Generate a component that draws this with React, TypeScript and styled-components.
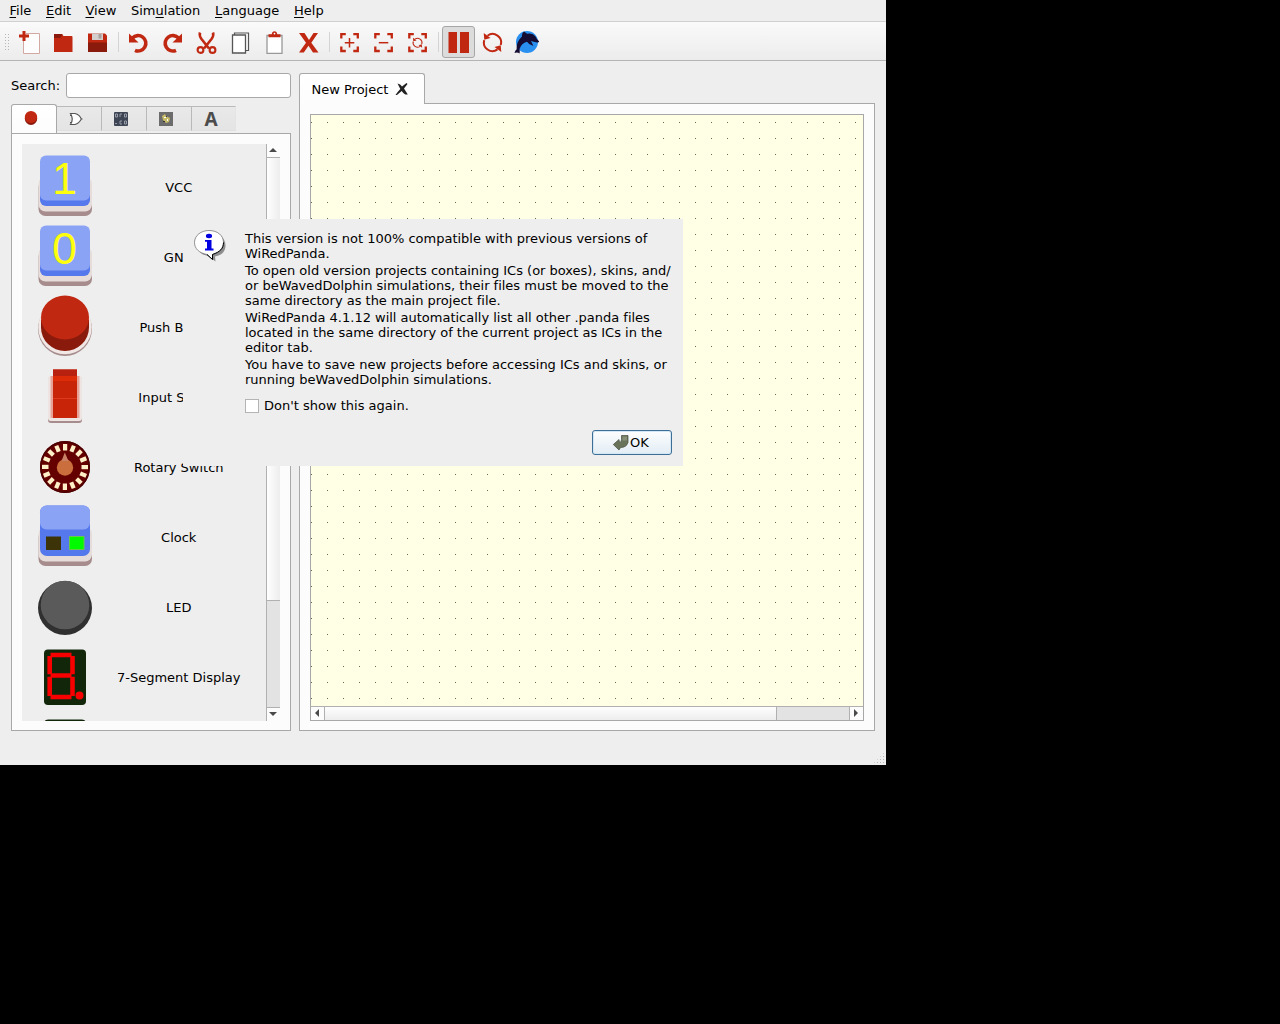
import React from "react";
import styled, { createGlobalStyle, css } from "styled-components";

const GlobalStyle = createGlobalStyle`
  html, body { margin: 0; padding: 0; background: #000; overflow: hidden; }
  *, *::before, *::after { box-sizing: border-box; }
  svg { display: block; flex: none; }
`;

const RED = "#c02812";
const DARK_RED = "#8a1a0b";

const Window = styled.div`
  position: relative;
  width: 886px;
  height: 765px;
  display: flex;
  flex-direction: column;
  background: #eeeeee;
  color: #000;
  font: 13px/15px "DejaVu Sans", sans-serif;
  cursor: default;
`;

const MenuBar = styled.nav`
  display: flex;
  height: 21px;
  padding: 3px 0 0 9.5px;
`;
const MenuItem = styled.span<{ $w: number }>`
  width: ${(p) => p.$w}px;
  flex: none;
  white-space: nowrap;
  u { text-underline-offset: 2px; text-decoration-thickness: 1px; text-decoration-skip-ink: none; }
`;

const ToolBar = styled.div`
  display: flex;
  align-items: center;
  height: 40px;
  padding: 2px 0 0 4px;
  border-top: 1px solid #d0d0d0;
  border-bottom: 1px solid #b4b4b4;
  background: linear-gradient(#fafafa, #ececec);
`;
const Grip = styled.div<{ $w: number; $h: number }>`
  width: ${(p) => p.$w}px;
  height: ${(p) => p.$h}px;
  background-image: radial-gradient(circle at 1.5px 1.5px, #b4b4b4 0.5px, transparent 0.9px);
  background-size: 3px 3px;
`;
const CornerGrip = styled(Grip)`
  clip-path: polygon(100% 0, 100% 100%, 0 100%);
`;
const ToolGroup = styled.div<{ $ml?: number }>`
  display: flex;
  margin-left: ${(p) => p.$ml ?? 0}px;
`;
const ToolButton = styled.button<{ $active?: boolean }>`
  display: flex;
  align-items: center;
  justify-content: center;
  width: 33px;
  height: 32px;
  margin-right: 1px;
  padding: 0 1px 0 0;
  border: 1px solid transparent;
  border-radius: 3px;
  background: transparent;
  ${(p) => p.$active && css`
    border-color: #a6a6a6;
    background: #dcdcdc;
  `}
`;
const Separator = styled.div`
  width: 7px;
  height: 20px;
  border-left: 1px solid #d4d4d4;
  margin-left: 3px;
  margin-right: -3px;
`;

const Body = styled.main`
  display: flex;
  gap: 8px;
  height: 670px;
  padding: 12px 11px 0;
`;
const Side = styled.aside`
  width: 280px;
  display: flex;
  flex-direction: column;
`;
const SearchRow = styled.label`
  display: flex;
  align-items: center;
  justify-content: space-between;
  height: 25px;
  margin-bottom: 6px;
`;
const SearchInput = styled.input`
  width: 225px;
  height: 25px;
  border: 1px solid #a8a8a8;
  border-radius: 3px;
  background: #fff;
  outline: none;
`;
const TabRow = styled.div`
  display: flex;
  align-items: flex-end;
  height: 29px;
`;
const SideTab = styled.button<{ $active?: boolean; $last?: boolean }>`
  display: flex;
  align-items: center;
  justify-content: center;
  width: 45px;
  height: 25px;
  margin-bottom: 2px;
  padding: 0 6px 0 0;
  border: 1px solid #b9b9b9;
  border-left: 0;
  border-bottom-color: #e0e0e0;
  background: linear-gradient(#e9e9e9, #e4e4e4);
  ${(p) => p.$last && css`
    width: 44px;
    padding-right: 5px;
    border-right-color: #e4e4e4;
  `}
  ${(p) => p.$active && css`
    width: 46px;
    height: 29px;
    margin-bottom: 0;
    padding-bottom: 3px;
    border: 1px solid #a8a8a8;
    border-bottom: 0;
    border-radius: 3px 3px 0 0;
    background: linear-gradient(#ffffff, #fcfcfc);
  `}
`;
const SidePanel = styled.section`
  display: flex;
  width: 280px;
  height: 598px;
  padding: 10px;
  border: 1px solid #a8a8a8;
  background: #fcfcfc;
`;
const List = styled.div`
  width: 244px;
  height: 577px;
  padding-top: 8px;
  overflow: hidden;
  background: #eeeeee;
`;
const Item = styled.div`
  display: flex;
  align-items: center;
  height: 70px;
  padding-left: 11px;
`;
const ItemLabel = styled.span`
  flex: 1;
  padding-left: 4px;
  padding-right: 9.5px;
  text-align: center;
  white-space: nowrap;
`;

const VScroll = styled.div`
  display: flex;
  flex-direction: column;
  width: 14px;
  height: 577px;
  border-left: 1px solid #b0b0b0;
`;
const HScroll = styled.div`
  display: flex;
  height: 14px;
  border-top: 1px solid #b0b0b0;
`;
const Arrow = styled.div`
  display: flex;
  align-items: center;
  justify-content: center;
  flex: none;
  width: 13px;
  height: 13px;
  padding: 0 2px 2px 0;
  background: #fcfcfc;
`;
const Thumb = styled.div<{ $v?: boolean; $size: number }>`
  flex: none;
  ${(p) => p.$v ? css`
    height: ${p.$size}px;
    border: solid #b0b0b0;
    border-width: 1px 0;
    background: linear-gradient(90deg, #fefefe, #ededed);
  ` : css`
    width: ${p.$size}px;
    border: solid #b0b0b0;
    border-width: 0 1px;
    background: linear-gradient(#fefefe, #ededed);
  `}
`;
const Trough = styled.div<{ $v?: boolean }>`
  flex: 1;
  background: #e3e3e3;
  ${(p) => p.$v ? css`border-bottom: 1px solid #b0b0b0;` : css`border-right: 1px solid #b0b0b0;`}
`;

const Work = styled.section`
  width: 576px;
`;
const ProjectTab = styled.div`
  display: flex;
  align-items: center;
  gap: 7px;
  position: relative;
  z-index: 1;
  width: 126px;
  height: 31px;
  margin-bottom: -1px;
  padding: 0 0 0 11.5px;
  border: 1px solid #a8a8a8;
  border-bottom: 0;
  border-radius: 3px 3px 0 0;
  background: linear-gradient(#ffffff, #fcfcfc);
  white-space: nowrap;
`;
const WorkPanel = styled.div`
  height: 628px;
  padding: 10px;
  border: 1px solid #a8a8a8;
  background: #fcfcfc;
`;
const Frame = styled.div`
  height: 607px;
  border: 1px solid #a8a8a8;
`;
const Scene = styled.div`
  height: 591px;
  background-image:
    linear-gradient(90deg, transparent 1px, #ffffe6 1px),
    linear-gradient(#ffffe6 7px, #66665a 7px, #66665a 8px, #ffffe6 8px);
  background-size: 16px 16px;
`;
const StatusBar = styled.div`
  display: flex;
  justify-content: flex-end;
  align-items: flex-end;
  height: 34px;
  padding: 0 1px 1px 0;
`;

const Dialog = styled.div`
  position: absolute;
  left: 183px;
  top: 219px;
  width: 500px;
  height: 247px;
  display: flex;
  flex-direction: column;
  padding: 11px;
  background: #eeeeee;
`;
const Message = styled.div`
  display: flex;
  gap: 17px;
`;
const Copy = styled.div`
  display: flex;
  flex-direction: column;
  gap: 2px;
  padding-top: 1px;
  letter-spacing: -0.008px;
  white-space: nowrap;
`;
const Para = styled.p`
  margin: 0;
`;
const CheckRow = styled.label`
  display: flex;
  align-items: center;
  gap: 5px;
  height: 15px;
  margin: 11px 0 0 51px;
`;
const Box = styled.span`
  width: 14px;
  height: 14px;
  border: 1px solid #b4b4b4;
  background: #fff;
`;
const OkButton = styled.button`
  display: flex;
  align-items: center;
  justify-content: center;
  gap: 1px;
  width: 80px;
  height: 25px;
  margin: auto 0 0 auto;
  padding: 0 2px 0 0;
  border: 1px solid #3d6f96;
  border-radius: 3px;
  background: linear-gradient(#fdfdfe, #e2edf4);
  box-shadow: inset 0 0 0 1px #d3e7f4;
  font: inherit;
  color: #000;
`;

const Svg = ({ s = 24, dx = 0, dy = 0, children }: { s?: number; dx?: number; dy?: number; children: React.ReactNode }) => (
  <svg width={s} height={s} viewBox={`${-dx} ${-dy} ${s} ${s}`}>{children}</svg>
);

const NewIcon = () => (
  <Svg dx={2}>
    <path d="M7 3.500H20.500V23.500H4.500V10" fill="#fdfdfd" stroke="#d2a8a2" />
    <path d="M5 1v10M0 6h10" stroke={RED} strokeWidth="3" />
  </Svg>
);
const OpenIcon = () => (
  <Svg dx={1} dy={0.5}><path d="M2 3.500h8l1.500 2H19.500q1 0 1 1V21.500H2Z" fill={RED} /><path d="M2 3.500h8.500l-2 4H2Z" fill={DARK_RED} /></Svg>
);
const SaveIcon = () => (
  <Svg dx={1} dy={0.5}>
    <path d="M2 3H19l2 2V21.500H2Z" fill={RED} />
    <path d="M2 12H21V21.500H2Z" fill={DARK_RED} />
    <path d="M6 3h11v6.500h-11Z" fill="#d4cfcc" /><path d="M12.500 3.500h3v4.500h-3Z" fill="#a8a09c" />
  </Svg>
);
const TurnArrow = () => (
  <>
    <path d="M5.500 8A7.700 7.700 0 1 1 8 20.300" fill="none" stroke={RED} strokeWidth="3.600" />
    <path d="M2 3.500V12.500H11.500Z" fill={RED} />
  </>
);
const UndoIcon = () => <Svg dx={1}><TurnArrow /></Svg>;
const RedoIcon = () => (
  <Svg><g transform="translate(24 0) scale(-1 1)"><TurnArrow /></g></Svg>
);
const CutIcon = () => (
  <Svg dx={0.5} dy={0.5}>
    <path d="M5.500 2Q4.500 5 7 8.500L14.500 18M18.500 2Q19.500 5 17 8.500L9.500 18" fill="none" stroke={RED} strokeWidth="2.600" />
    <circle cx="6" cy="19.500" r="2.900" fill="none" stroke={RED} strokeWidth="2.100" />
    <circle cx="18" cy="19.500" r="2.900" fill="none" stroke={RED} strokeWidth="2.100" />
  </Svg>
);
const CopyIcon = () => (
  <Svg dy={0.5}>
    <path d="M6.500 2.500H20.500V20H17V5.500H6.500Z" fill="#fff" stroke="#555" strokeWidth="1.200" />
    <path d="M4.500 4.500H17.500V22.500H4.500Z" fill="#fff" stroke="#555" strokeWidth="1.300" />
  </Svg>
);
const PasteIcon = () => (
  <Svg dx={0.5}>
    <path d="M4.500 5.500H19.500V23.500H4.500Z" fill="#fff" stroke="#999" strokeWidth="1.300" />
    <path d="M6 4.200H9.300C9.300 .300 14.700 .300 14.700 4.200H18V7.200H6Z" fill={RED} />
    <circle cx="12" cy="3.600" r=".9" fill="#fff" />
  </Svg>
);
const DeleteIcon = () => (
  <Svg dx={0.5} dy={0.5}><path d="M2.500 2.500H8L12.500 9.500L17 2.500H21.500L14.800 12.200L22 22H16.500L12 15.200L7.300 22H2.500L9.500 12.200Z" fill={RED} /></Svg>
);
const Corners = () => (
  <path d="M4 8V3.700H8.500M16 3.700H20.500V8M20.500 16V20.500H16M8.500 20.500H4V16" fill="none" stroke={RED} strokeWidth="2.300" />
);
const ZoomInIcon = () => <Svg dx={0.3} dy={0.5}><Corners /><path d="M7.500 12.200h9.500M12.200 7.500v9.500" stroke={RED} strokeWidth="1.500" /></Svg>;
const ZoomOutIcon = () => <Svg dx={0.3} dy={0.5}><Corners /><path d="M7.500 12.200h9.500" stroke={RED} strokeWidth="1.500" /></Svg>;
const Cycle = () => (
  <>
    <path d="M7 5.200A8.500 8.500 0 0 1 20.200 14.500M17 18.900A8.500 8.500 0 0 1 3.800 9.600" fill="none" stroke={RED} strokeWidth="2" />
    <path d="M3.200 2.500L3.800 9.300L10 7.500Z" fill={RED} />
    <path d="M20.800 21.600L20.200 14.800L14 16.600Z" fill={RED} />
  </>
);
const ZoomRangeIcon = () => <Svg dx={0.3} dy={0.5}><Corners /><g transform="translate(6 6) scale(.52)"><Cycle /></g></Svg>;
const PauseIcon = () => <Svg><path d="M2.500 2H11V23H2.500ZM14 2H23V23H14Z" fill={RED} /></Svg>;
const ReloadIcon = () => <Svg dx={0.5} dy={0.5}><Cycle /></Svg>;
const DolphinIcon = () => (
  <Svg s={26} dx={0.5} dy={-0.5}>
    <circle cx="13.500" cy="13.500" r="11" fill="#2a90f0" />
    <path d="M1 24.500Q1.500 22 3.200 20.800Q2.500 13.500 8.500 8Q8 5 10.500 3Q12.500 4.200 13.500 5.300Q19 4 22 8Q23 10.500 25.800 13Q25.500 14.500 22.500 13.800Q20.500 13.200 17.500 12.500L20 17.500Q15.500 16.500 13.500 13.200Q8 14.500 6 20.500Q6.500 22.500 6 25Q4 23.500 1 24.500Z" fill="#140c32" />
  </Svg>
);

const KeyCap = ({ digit }: { digit: string }) => (
  <svg width="64" height="70" viewBox="0 -3 64 70">
    <rect x="5.500" y="25" width="53.500" height="36" rx="7" fill="#a68c8c" />
    <rect x="5.500" y="22" width="53.500" height="34.500" rx="7" fill="#e6dcda" />
    <rect x="7" y="6" width="50" height="45" rx="6" fill="#5578ec" />
    <rect x="7" y="0.500" width="50" height="45" rx="6" fill="#8ba3f4" />
    <text x="31.500" y="38.500" textAnchor="middle" fontFamily="Liberation Sans, Arial, sans-serif" fontSize="45" fill="#ffff10">{digit}</text>
  </svg>
);
const PushButtonPart = () => (
  <Svg s={64} dy={-2.5}>
    <circle cx="32" cy="36.500" r="27" fill="#a68c8c" />
    <circle cx="32" cy="35" r="26.700" fill="#f1e8e6" />
    <path d="M8 27V35A24 23.500 0 0 0 56 35V27Z" fill={DARK_RED} />
    <ellipse cx="32" cy="25" rx="24" ry="22" fill={RED} />
  </Svg>
);
const SwitchPart = () => (
  <Svg s={64}>
    <rect x="15" y="12" width="34" height="46" rx="3" fill="#a68c8c" />
    <rect x="15" y="11" width="34" height="45" rx="3" fill="#eee4e2" />
    <path d="M17.500 11H46.500V53H17.500Z" fill="#e8a398" />
    <path d="M20 4.500H44V53H20Z" fill="#c82408" />
    <path d="M20 11H44V16H20Z" fill="#dc2c08" /><path d="M20 4.500H44V11H20Z" fill="#b82010" /><path d="M20 33.500H44" stroke="#dc3c1c" />
  </Svg>
);
const RotaryPart = () => (
  <Svg s={64}>
    <ellipse cx="32" cy="32" rx="25" ry="26" fill="#640000" />
    <ellipse cx="32" cy="32" rx="24.300" ry="25.300" fill="none" stroke="#4a0000" strokeWidth="1.400" />
    {Array.from({ length: 16 }, (_, i) => (
      <rect key={i} x="30" y="9" width="4.200" height="6.500" fill="#fff0c8" transform={`rotate(${i * 22.5} 32 32)`} />
    ))}
    <circle cx="32" cy="32.500" r="8.200" fill="#c96e3c" /><path d="M31.800 17.500L35.500 26H28.500Z" fill="#c98064" />
  </Svg>
);
const ClockPart = () => (
  <Svg s={64}>
    <rect x="5.500" y="25" width="53.500" height="36" rx="7" fill="#a68c8c" />
    <rect x="5.500" y="22" width="53.500" height="34.500" rx="7" fill="#e6dcda" />
    <rect x="7" y="0.500" width="50" height="50.500" rx="7" fill="#5578ec" />
    <rect x="7" y="0.500" width="50" height="24" rx="6.500" fill="#8ba3f4" />
    <path d="M13 31.500H28V45H13Z" fill="#3c3408" />
    <path d="M36.500 31.500H51V44.500H36.500Z" fill="#00fa00" stroke="#68c848" />
  </Svg>
);
const LedPart = () => (
  <Svg s={64}>
    <circle cx="32" cy="33" r="27" fill="#303030" />
    <circle cx="32" cy="30" r="24.300" fill="#5a5a5a" />
  </Svg>
);
const SegmentPart = () => (
  <Svg s={64}>
    <rect x="11" y="4.500" width="42" height="55.500" rx="4" fill="#12260a" />
    <path d="M17.500 10H38.500M17.500 30.500H38.500M17.500 52H38.500M16.700 11V29.300M16.700 31.700V51M39.500 11V29.300M39.500 31.700V51" fill="none" stroke="#f80000" strokeWidth="4.600" />
    <circle cx="46.500" cy="50.500" r="4" fill="#f80000" />
  </Svg>
);

const GateIcon = () => (
  <Svg s={14}><path d="M1.500 1.500H6Q10.500 2.500 12.300 7Q10 11.500 6 12.500H1.500Q5 7 1.500 1.500ZM1 3.500H3M1 10.500H3M12.300 7H13.500" fill="#fff" stroke="#555" strokeWidth="1.200" /></Svg>
);
const MemoryIcon = () => (
  <Svg s={14}>
    <rect width="14" height="14" rx="1" fill="#3e4554" />
    <g fill="none" stroke="#a2a6b0" strokeWidth=".900"><path d="M1.500 2h2v3h-2ZM6 5V2h2M10.500 2h2v3h-2ZM8 9H6v3h2M10.500 9h2v3h-2ZM1 11.500h2" /></g>
  </Svg>
);
const IcIcon = () => (
  <Svg s={14}>
    <rect width="14" height="14" fill="#6c6c6c" />
    <path d="M3 4L6 2L7 4L11 6L10 10L7 11L4 8Z" fill="#c8bc68" /><path d="M5 5h2v1H5ZM8 7h1v2H8Z" fill="#fff" /><path d="M4 9h2v1H4ZM7 4h1v1H7Z" fill="#333" />
  </Svg>
);
const RedDot = () => (
  <Svg s={14}><ellipse cx="7" cy="7.500" rx="6.200" ry="6.500" fill={DARK_RED} /><ellipse cx="7" cy="6" rx="6.200" ry="6" fill={RED} /></Svg>
);
const LetterA = styled.span`
  font: bold 19px/18px "Noto Sans", sans-serif;
  color: #4c4c4c;
`;
const CloseIcon = () => (
  <Svg s={14}>
    <path d="M2.500 1.500Q5.500 2 7 4.500L11.500 1L12.500 2L9 6.500L12.800 12.500H10.300Q8.300 11.500 6.700 9L2 13H.500Q2.500 10 5.300 7Z" fill="#222" />
  </Svg>
);
const InfoIcon = () => (
  <Svg s={34}>
    <path d="M16 3C25 3 31.500 8 31.500 15.500C31.500 21.500 27.500 25.500 21 26.500L21.500 31.500L14 26C5 24 4 20 4 15Z" fill="#8e8e8e" />
    <path d="M15 .500C23.500 .500 29.500 5.500 29.500 12.500C29.500 18.500 26 22 18.500 24.500V29.500L13 24.500C5 23 .500 18.500 .500 12.500C.500 5.500 7 .500 15 .500Z" fill="#fff" stroke="#777" strokeWidth=".800" />
    <path d="M29.500 12.500C29.500 18.500 26 22 18.500 24.500V29.500L13 24.500" fill="none" stroke="#000" />
    <ellipse cx="15" cy="6" rx="3.100" ry="2.200" fill="#0000e0" />
    <path d="M11 10H17.500V18.500H19.500V20.500H11V18.500H13V11.800H11Z" fill="#0000e0" />
  </Svg>
);
const EnterIcon = () => (
  <Svg s={16} dx={-0.5}>
    <path d="M9 .500H15.500V7.500Q14 12.500 8 12.500L6.500 15L.800 9.500L6.500 4.500L7 7.500Q9 7 9 4.500Z" fill="#69735a" stroke="#464c3c" strokeWidth=".700" />
    <path d="M10 1.500H14.500V5.500H10Z" fill="#899078" />
  </Svg>
);
const Tri = ({ d }: { d: "up" | "down" | "left" | "right" }) => {
  const paths = { up: "M4 0L8 4H0Z", down: "M0 0H8L4 4Z", left: "M4 0V8L0 4Z", right: "M0 0L4 4L0 8Z" };
  const v = d === "up" || d === "down";
  return <svg width={v ? 8 : 4} height={v ? 4 : 8}><path d={paths[d]} fill="#4a4a4a" /></svg>;
};

const tools: React.ReactNode[][] = [
  [<NewIcon />, <OpenIcon />, <SaveIcon />],
  [<UndoIcon />, <RedoIcon />, <CutIcon />, <CopyIcon />, <PasteIcon />, <DeleteIcon />],
  [<ZoomInIcon />, <ZoomOutIcon />, <ZoomRangeIcon />],
  [<PauseIcon />, <ReloadIcon />, <DolphinIcon />],
];

const parts: [string, React.ReactNode][] = [
  ["VCC", <KeyCap digit="1" />],
  ["GND", <KeyCap digit="0" />],
  ["Push Button", <PushButtonPart />],
  ["Input Switch", <SwitchPart />],
  ["Rotary Switch", <RotaryPart />],
  ["Clock", <ClockPart />],
  ["LED", <LedPart />],
  ["7-Segment Display", <SegmentPart />],
  ["", <SegmentPart />],
];

export default function App() {
  return (
    <>
      <GlobalStyle />
      <Window>
        <MenuBar>
          <MenuItem $w={36.5}><u>F</u>ile</MenuItem>
          <MenuItem $w={39.5}><u>E</u>dit</MenuItem>
          <MenuItem $w={45.5}><u>V</u>iew</MenuItem>
          <MenuItem $w={84}>Sim<u>u</u>lation</MenuItem>
          <MenuItem $w={79}><u>L</u>anguage</MenuItem>
          <MenuItem $w={40}><u>H</u>elp</MenuItem>
        </MenuBar>
        <ToolBar>
          <Grip $w={6} $h={18} />
          {tools.map((group, g) => (
            <React.Fragment key={g}>
              {g > 0 && <Separator />}
              <ToolGroup $ml={g === 0 ? 3 : 0}>
                {group.map((icon, i) => (
                  <ToolButton key={i} $active={g === 3 && i === 0}>{icon}</ToolButton>
                ))}
              </ToolGroup>
            </React.Fragment>
          ))}
        </ToolBar>
        <Body>
          <Side>
            <SearchRow>Search:<SearchInput /></SearchRow>
            <TabRow>
              <SideTab $active><RedDot /></SideTab>
              <SideTab><GateIcon /></SideTab>
              <SideTab><MemoryIcon /></SideTab>
              <SideTab><IcIcon /></SideTab>
              <SideTab $last><LetterA>A</LetterA></SideTab>
            </TabRow>
            <SidePanel>
              <List>
                {parts.map(([name, icon], i) => (
                  <Item key={i}>{icon}<ItemLabel>{name}</ItemLabel></Item>
                ))}
              </List>
              <VScroll>
                <Arrow><Tri d="up" /></Arrow>
                <Thumb $v $size={444} />
                <Trough $v />
                <Arrow><Tri d="down" /></Arrow>
              </VScroll>
            </SidePanel>
          </Side>
          <Work>
            <ProjectTab>New Project<CloseIcon /></ProjectTab>
            <WorkPanel>
              <Frame>
                <Scene />
                <HScroll>
                  <Arrow><Tri d="left" /></Arrow>
                  <Thumb $size={453} />
                  <Trough />
                  <Arrow><Tri d="right" /></Arrow>
                </HScroll>
              </Frame>
            </WorkPanel>
          </Work>
        </Body>
        <StatusBar><CornerGrip $w={12} $h={12} /></StatusBar>
        <Dialog>
          <Message>
            <InfoIcon />
            <Copy>
              <Para>This version is not 100% compatible with previous versions of<br />WiRedPanda.</Para>
              <Para>To open old version projects containing ICs (or boxes), skins, and/<br />or beWavedDolphin simulations, their files must be moved to the<br />same directory as the main project file.</Para>
              <Para>WiRedPanda 4.1.12 will automatically list all other .panda files<br />located in the same directory of the current project as ICs in the<br />editor tab.</Para>
              <Para>You have to save new projects before accessing ICs and skins, or<br />running beWavedDolphin simulations.</Para>
            </Copy>
          </Message>
          <CheckRow><Box />Don't show this again.</CheckRow>
          <OkButton><EnterIcon />OK</OkButton>
        </Dialog>
      </Window>
    </>
  );
}
